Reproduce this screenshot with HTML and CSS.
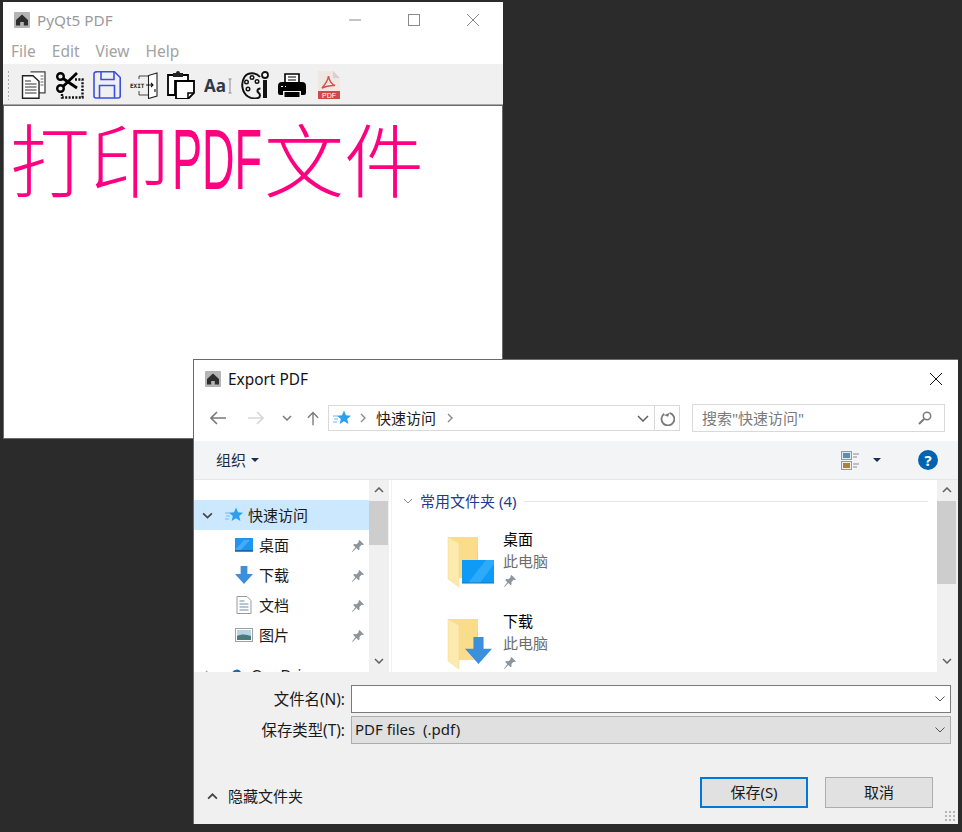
FILE: index.html
```html
<!DOCTYPE html>
<html>
<head>
<meta charset="utf-8">
<title>PyQt5 PDF</title>
<link rel="stylesheet" href="styles.css">
</head>
<body>
<svg class="defs" width="0" height="0">
    <symbol id="home" viewBox="0 0 16 16">
        <rect width="16" height="16" rx="1" fill="#b4b4b4"/>
        <path d="M8 2.500 14 8v5.500H9.800V10H6.200v3.500H2V8z" fill="#2d2d2d"/>
    </symbol>
    <symbol id="pin" viewBox="0 0 14 14">
        <path d="M8.500 1 13 5.500l-1.200.6-1.200-.4-2.200 2.200.2 2.400-1 1-2.200-2.200L1.500 13 1 12.500l3.400-4.200L2.200 6.100l1-1 2.400.2 2.200-2.200-.4-1.200z" fill="#8c959c"/>
    </symbol>
    <symbol id="star" viewBox="0 0 18 16">
        <path d="M11 0.500l2 4.800 5 .4-3.800 3.300 1.200 5-4.400-2.700-4.400 2.700 1.200-5L4 5.700l5-.4z" fill="#2b9ff0"/>
        <path d="M0 6h5M1 9h4M0 12h4" stroke="#6cbcf2" stroke-width="1"/>
    </symbol>
    <symbol id="folder" viewBox="0 0 48 52">
        <path d="M12 1h19v41H12z" fill="#f5cf6e"/>
        <path d="M1 1h30v3l-2 38H12z" fill="#fbdc8b"/>
        <path d="M1 1l11 6v44L1 43z" fill="#fdeaae" stroke="#f0d58f" stroke-width=".5"/>
    </symbol>
    <symbol id="arrow" viewBox="0 0 16 16">
        <path d="M5 0h6v7h5l-8 9-8-9h5z" fill="#3b8fdc"/>
    </symbol>
</svg>

<div class="window main-window">
    <div class="titlebar">
        <svg class="app-icon"><use href="#home"/></svg>
        <span class="main-title">PyQt5 PDF</span>
        <div class="caption-buttons">
            <svg class="caption" viewBox="0 0 14 14"><path d="M1 7h12" stroke="#8a8a8a"/></svg>
            <svg class="caption" viewBox="0 0 14 14"><rect x="1.500" y="1.500" width="11" height="11" fill="none" stroke="#8a8a8a"/></svg>
            <svg class="caption" viewBox="0 0 14 14"><path d="M1 1l12 12M13 1 1 13" stroke="#8a8a8a"/></svg>
        </div>
    </div>
    <div class="menubar">
        <span>File</span><span>Edit</span><span>View</span><span>Help</span>
    </div>
    <div class="toolbar">
        <div class="grip"></div>
        <svg class="tool" viewBox="0 0 28 28">
            <path d="M11.500 .8h14.500v21h-6" fill="#fff" stroke="#444" stroke-width="1.300"/>
            <path d="M3.500 4.700h10.500l6 5.500v17H3.500z" fill="#fff" stroke="#222" stroke-width="1.400"/>
            <path d="M6 10h6M6 13h11.500M6 16h11.500M6 19h11.500M6 22h11.500" stroke="#333" stroke-width="1.200"/>
            <path d="M21.500 5h3M21.500 8h3M21.500 11h3M21.500 14h3" stroke="#666"/>
        </svg>
        <svg class="tool" viewBox="0 0 28 28">
            <circle cx="4.500" cy="5.500" r="3.300" fill="none" stroke="#000" stroke-width="2.400"/>
            <circle cx="4.500" cy="17.500" r="3.300" fill="none" stroke="#000" stroke-width="2.400"/>
            <path d="M7 7.500 21 17M7 15.500 21 2" stroke="#000" stroke-width="2.800"/>
            <path d="M19 8.500h7.500v18H6V22" fill="none" stroke="#111" stroke-width="2.400" stroke-dasharray="2 1.400"/>
        </svg>
        <svg class="tool" viewBox="0 0 28 28">
            <path d="M3 .8h18.500L27.200 6.500V25a2 2 0 0 1-2 2H3a2 2 0 0 1-2-2V3a2 2 0 0 1 2-2z" fill="none" stroke="#3d4fe0" stroke-width="1.600"/>
            <path d="M8 1v7.500h13V1M6.500 27V14.500h15V27" fill="none" stroke="#3d4fe0" stroke-width="1.600"/>
        </svg>
        <svg class="tool" viewBox="0 0 28 28">
            <text class="exit-label" x="0" y="17">EXIT</text>
            <path d="M9 8V5h10M9 20v4h10" fill="none" stroke="#444" stroke-width="1"/>
            <path d="M18.500 4.500 27 2v23l-8.500 2.500z" fill="#fff" stroke="#222" stroke-width="1.100"/>
            <path d="M16 14h7m-2-2 2 2-2 2M25 18v3" fill="none" stroke="#111" stroke-width="1.100"/>
        </svg>
        <svg class="tool" viewBox="0 0 28 28">
            <path d="M1 4h20v6H8v14H1z" fill="#fff" stroke="#000" stroke-width="1.800"/>
            <path d="M6 2h3a2 2 0 0 1 4 0h3v4H6z" fill="#222"/>
            <path d="M9 10h18v12l-6 6H9z" fill="#fff" stroke="#000" stroke-width="1.800"/>
            <path d="M27 22h-6v6" fill="none" stroke="#000" stroke-width="1.500"/>
        </svg>
        <svg class="tool" viewBox="0 0 28 28">
            <text class="aa-label" x="0" y="21">Aa</text>
            <path d="M24.500 8h3M26 8v14M24.500 22h3" stroke="#8a8a8a" fill="none"/>
        </svg>
        <svg class="tool" viewBox="0 0 28 28">
            <path d="M19 6C15 1 7 1 3.500 6-.5 12 1 22 7 25.500c5 3 12 2.500 12-1 0-3-3-2.500-2.500-5 .3-1.500 1.500-2 3-2" fill="none" stroke="#111" stroke-width="2"/>
            <circle cx="11" cy="6.500" r="1.800" fill="none" stroke="#111" stroke-width="1.400"/>
            <circle cx="5.500" cy="11" r="1.800" fill="none" stroke="#111" stroke-width="1.400"/>
            <circle cx="16" cy="10.500" r="1.800" fill="none" stroke="#111" stroke-width="1.400"/>
            <circle cx="7" cy="18" r="1.800" fill="none" stroke="#111" stroke-width="1.400"/>
            <circle cx="24" cy="4" r="3" fill="#fff" stroke="#111" stroke-width="1.800"/>
            <path d="M22 9h4v18h-4z" fill="#111"/>
        </svg>
        <svg class="tool" viewBox="0 0 28 28">
            <path d="M7 3h14v9H7z" fill="#fff" stroke="#000" stroke-width="1.600"/>
            <path d="M10 6h8M10 9h8" stroke="#000" stroke-width="1.200"/>
            <path d="M4 11h20a4 4 0 0 1 4 4v7a2 2 0 0 1-2 2h-3v-4H5v4H2a2 2 0 0 1-2-2v-7a4 4 0 0 1 4-4z" fill="#000"/>
            <path d="M6.500 21h15v5h-15z" fill="#000"/>
            <path d="M3 15.500h2M7 15.500h1" stroke="#fff"/>
        </svg>
        <svg class="tool pdf-tool" viewBox="0 0 23 28">
            <path d="M0 0h15l7 7v21H0z" fill="#efe8e2"/>
            <path d="M15 0v7h7z" fill="#d8d0ca"/>
            <path d="M10.500 5c-.5 4-3 8-6.500 12 4-2 8-3 13-2.500-3-1-6-5-6.500-9.500z" fill="none" stroke="#d2514f" stroke-width="1.500"/>
            <rect y="20" width="22" height="8" fill="#d2494b"/>
            <text class="pdf-label" x="11" y="26.500">PDF</text>
        </svg>
    </div>
    <div class="editor">打印<span class="latin-slot"><span class="latin">PDF</span></span>文件</div>
</div>

<div class="window dialog">
    <div class="titlebar dialog-title">
        <svg class="app-icon"><use href="#home"/></svg>
        <span>Export PDF</span>
        <svg class="dialog-close" viewBox="0 0 14 14"><path d="M1 1l12 12M13 1 1 13" stroke="#111"/></svg>
    </div>
    <div class="navbar">
        <svg class="nav-icon" viewBox="0 0 16 14"><path d="M1 7h15M7 1 1 7l6 6" fill="none" stroke="#7a7a7a" stroke-width="1.600"/></svg>
        <svg class="nav-icon nav-forward" viewBox="0 0 16 14"><path d="M0 7h15M9 1l6 6-6 6" fill="none" stroke="#d8d8d8" stroke-width="1.600"/></svg>
        <svg class="nav-drop" viewBox="0 0 10 6"><path d="M1 1l4 4 4-4" fill="none" stroke="#7a7a7a" stroke-width="1.500"/></svg>
        <svg class="nav-up" viewBox="0 0 14 16"><path d="M7 16V1M1 7l6-6 6 6" fill="none" stroke="#7a7a7a" stroke-width="1.600"/></svg>
        <div class="address">
            <svg class="addr-star"><use href="#star"/></svg>
            <svg class="crumb" viewBox="0 0 6 10"><path d="M1 1l4 4-4 4" fill="none" stroke="#8a8a8a" stroke-width="1.400"/></svg>
            <span>快速访问</span>
            <svg class="crumb last" viewBox="0 0 6 10"><path d="M1 1l4 4-4 4" fill="none" stroke="#8a8a8a" stroke-width="1.400"/></svg>
            <svg class="addr-drop" viewBox="0 0 12 7"><path d="M1 1l5 5 5-5" fill="none" stroke="#606060" stroke-width="1.500"/></svg>
            <div class="refresh">
                <svg viewBox="0 0 14 14" width="15" height="15"><path d="M4 2.500A6 6 0 1 0 9 1.700" fill="none" stroke="#7a7a7a" stroke-width="1.700"/><path d="M8.500 0v4h-4z" fill="#7a7a7a" transform="rotate(20 4 2)"/></svg>
            </div>
        </div>
        <div class="search">
            <span>搜索"快速访问"</span>
            <svg viewBox="0 0 14 14" width="14" height="14"><circle cx="9" cy="5" r="3.700" fill="none" stroke="#7a7a7a" stroke-width="1.500"/><path d="M6 8 1 13" stroke="#7a7a7a" stroke-width="2"/></svg>
        </div>
    </div>
    <div class="commandbar">
        <span>组织</span>
        <i class="caret"></i>
        <div class="command-right">
            <svg class="view-icon" viewBox="0 0 19 19">
                <rect x=".5" y=".5" width="10" height="8" fill="#dfe8ef" stroke="#9a9a9a"/>
                <rect x="2" y="2" width="7" height="5" fill="#5a8fae"/>
                <rect x=".5" y="10.500" width="10" height="8" fill="#eee" stroke="#9a9a9a"/>
                <rect x="2" y="12" width="7" height="5" fill="#a9843c"/>
                <path d="M12 3h6M12 6h4M12 13h6M12 16h4" stroke="#8a8a8a"/>
            </svg>
            <i class="caret view-caret"></i>
            <b class="help">?</b>
        </div>
    </div>
    <div class="panes">
        <div class="sidebar">
            <div class="tree">
                <div class="tree-row selected">
                    <svg class="tree-chevron" viewBox="0 0 10 6"><path d="M1 1l4 4 4-4" fill="none" stroke="#444" stroke-width="1.500"/></svg>
                    <svg class="tree-star"><use href="#star"/></svg>
                    <span>快速访问</span>
                </div>
                <div class="tree-row child">
                    <svg class="tree-icon" viewBox="0 0 18 14"><rect width="18" height="13" fill="#1e96f0"/><path d="M0 13h18" stroke="#1b4f7c" stroke-width="1.400"/><path d="M0 12 9 2h6L6 12z" fill="#45abf5"/></svg>
                    <span>桌面</span>
                    <svg class="pin"><use href="#pin"/></svg>
                </div>
                <div class="tree-row child">
                    <svg class="tree-icon"><use href="#arrow"/></svg>
                    <span>下载</span>
                    <svg class="pin"><use href="#pin"/></svg>
                </div>
                <div class="tree-row child">
                    <svg class="tree-icon" viewBox="0 0 18 18"><path d="M2 .5h10l4 4v13H2z" fill="#fff" stroke="#9a9a9a"/><path d="M4.500 5h5M4.500 8h9M4.500 11h9M4.500 14h9" stroke="#6a8fa8"/></svg>
                    <span>文档</span>
                    <svg class="pin"><use href="#pin"/></svg>
                </div>
                <div class="tree-row child">
                    <svg class="tree-icon" viewBox="0 0 18 14"><rect x=".5" y=".5" width="17" height="13" fill="#fff" stroke="#a0a0a0"/><rect x="2" y="2" width="14" height="10" fill="#b5d4e6"/><path d="M2 8c4-2 9-2 14 0v4H2z" fill="#4a7a7a"/></svg>
                    <span>图片</span>
                    <svg class="pin"><use href="#pin"/></svg>
                </div>
                <div class="tree-row onedrive">
                    <svg class="tree-chevron side" viewBox="0 0 6 10"><path d="M1 1l4 4-4 4" fill="none" stroke="#a0a0a0" stroke-width="1.400"/></svg>
                    <svg class="tree-star" viewBox="0 0 18 12"><path d="M4 11a3.500 3.500 0 0 1 0-7 5 5 0 0 1 9-1 4 4 0 0 1 1 8z" fill="#0f6cbd"/></svg>
                    <span>OneDrive</span>
                </div>
            </div>
            <div class="scrollbar">
                <svg class="scroll-arrow" viewBox="0 0 10 6"><path d="M1 5l4-4 4 4" fill="none" stroke="#606060" stroke-width="1.500"/></svg>
                <div class="thumb side-thumb"></div>
                <svg class="scroll-arrow bottom" viewBox="0 0 10 6"><path d="M1 1l4 4 4-4" fill="none" stroke="#606060" stroke-width="1.500"/></svg>
            </div>
        </div>
        <div class="files">
            <div class="file-list">
                <div class="group-head">
                    <svg viewBox="0 0 10 6" width="10" height="6"><path d="M1 1l4 4 4-4" fill="none" stroke="#888" stroke-width="1"/></svg>
                    <span>常用文件夹 (4)</span>
                    <i></i>
                </div>
                <div class="file-item">
                    <div class="folder">
                        <svg class="folder-base"><use href="#folder"/></svg>
                        <svg class="folder-badge" viewBox="0 0 32 24"><rect width="32" height="23" fill="#0e9bf8"/><path d="M6 23 24 0h8v4L18 23z" fill="#2eaafa"/><path d="M0 23h32" stroke="#1a6ea8"/></svg>
                    </div>
                    <div class="file-text">
                        <b>桌面</b>
                        <span>此电脑</span>
                        <svg class="pin"><use href="#pin"/></svg>
                    </div>
                </div>
                <div class="file-item">
                    <div class="folder">
                        <svg class="folder-base"><use href="#folder"/></svg>
                        <svg class="folder-arrow"><use href="#arrow"/></svg>
                    </div>
                    <div class="file-text">
                        <b>下载</b>
                        <span>此电脑</span>
                        <svg class="pin"><use href="#pin"/></svg>
                    </div>
                </div>
            </div>
            <div class="scrollbar">
                <svg class="scroll-arrow" viewBox="0 0 10 6"><path d="M1 5l4-4 4 4" fill="none" stroke="#606060" stroke-width="1.500"/></svg>
                <div class="thumb file-thumb"></div>
                <svg class="scroll-arrow bottom" viewBox="0 0 10 6"><path d="M1 1l4 4 4-4" fill="none" stroke="#606060" stroke-width="1.500"/></svg>
            </div>
        </div>
    </div>
    <div class="footer">
        <div class="form">
            <label>文件名(N):</label>
            <div class="combo">
                <svg viewBox="0 0 10 6" width="10" height="6"><path d="M0.500 .5 5 5l4.500-4.500" fill="none" stroke="#555"/></svg>
            </div>
            <label>保存类型(T):</label>
            <div class="combo type">
                <span>PDF files&nbsp; (.pdf)</span>
                <svg viewBox="0 0 10 6" width="10" height="6"><path d="M0.500 .5 5 5l4.500-4.500" fill="none" stroke="#555"/></svg>
            </div>
        </div>
        <div class="actions">
            <div class="hide-folders">
                <svg viewBox="0 0 10 6" width="11" height="7"><path d="M1 5l4-4 4 4" fill="none" stroke="#444" stroke-width="1.600"/></svg>
                <span>隐藏文件夹</span>
            </div>
            <button class="btn primary">保存(S)</button>
            <button class="btn">取消</button>
        </div>
        <div class="resize-grip"></div>
    </div>
</div>
</body>
</html>
```

FILE: styles.css
```css
* {
    margin: 0;
    padding: 0;
    box-sizing: border-box;
}

body {
    width: 962px;
    height: 832px;
    overflow: hidden;
    background-color: #2b2b2b;
    font-family: "Noto Sans", "Noto Sans CJK SC", sans-serif;
    font-size: 15px;
    color: #1a1a1a;
    position: relative;
}

.defs {
    position: absolute;
}

.window {
    position: absolute;
    display: flex;
    flex-direction: column;
    background-color: #fff;
}

.main-window {
    left: 3px;
    top: 2px;
    width: 500px;
    height: 437px;
}

.dialog {
    left: 193px;
    top: 359px;
    width: 765px;
    height: 465px;
    border-left: 1px solid #6a6a6a;
    border-top: 1px solid #6a6a6a;
}

.titlebar {
    display: flex;
    align-items: center;
    flex-shrink: 0;
}

.main-window .titlebar {
    height: 36px;
    padding-left: 11px;
}

.app-icon {
    width: 16px;
    height: 16px;
}

.main-title {
    margin-left: 7px;
    font-size: 15.300px;
    color: #9a9a9a;
}

.caption-buttons {
    margin-left: auto;
    display: flex;
    gap: 45px;
    padding-right: 23px;
}

.caption {
    width: 14px;
    height: 14px;
}

.menubar {
    height: 27px;
    display: flex;
    gap: 16px;
    align-items: center;
    padding: 0 8px;
    font-size: 15.500px;
    color: #a2a2a2;
    border-bottom: 1px solid #f0f0f0;
    flex-shrink: 0;
}

.toolbar {
    height: 40px;
    display: flex;
    align-items: center;
    gap: 9px;
    background-color: #f0f0f0;
    border-bottom: 1px solid #a8a8a8;
    flex-shrink: 0;
    padding-left: 4px;
}

.grip {
    width: 3px;
    height: 30px;
    background-image: radial-gradient(#aaa 1px, transparent 1px);
    background-size: 3px 4px;
}

.tool {
    width: 28px;
    height: 28px;
}

.pdf-tool {
    width: 23px;
    margin-left: 3px;
}

.exit-label {
    font-family: "DejaVu Sans Mono", monospace;
    font-size: 6px;
    font-weight: bold;
    fill: #222;
}

.aa-label {
    font-family: "Open Sans", sans-serif;
    font-size: 17px;
    font-weight: bold;
    fill: #2e3a48;
}

.pdf-label {
    font-family: "Liberation Sans", sans-serif;
    font-size: 7px;
    fill: #fff;
    text-anchor: middle;
}

.editor {
    flex: 1;
    border: 1px solid #6a6a6a;
    padding-left: 6px;
    font-family: "Noto Sans CJK SC", sans-serif;
    font-size: 80px;
    font-weight: 300;
    line-height: 96px;
    color: #ff0080;
    white-space: nowrap;
}

.latin-slot {
    display: inline-block;
    width: 94px;
    vertical-align: 2px;
}

/* the reference face is a tall condensed one, none is installed */
.latin {
    display: inline-block;
    margin-left: 2px;
    font-family: "Liberation Sans", sans-serif;
    font-size: 85px;
    font-weight: normal;
    transform: scaleX(.53);
    transform-origin: left;
}

.dialog-title {
    height: 38px;
    padding-left: 11px;
    gap: 7px;
    font-size: 15.400px;
    color: #111;
}

.dialog-close {
    width: 14px;
    height: 14px;
    margin-left: auto;
    margin-right: 15px;
}

.navbar {
    height: 43px;
    display: flex;
    align-items: center;
    flex-shrink: 0;
    padding: 0 0 3px 16px;
}

.nav-icon {
    width: 16px;
    height: 14px;
}

.nav-forward {
    margin-left: 22px;
}

.nav-drop {
    width: 10px;
    height: 6px;
    margin-left: 18px;
}

.nav-up {
    width: 12px;
    height: 15px;
    margin-left: 15px;
}

.address {
    width: 352px;
    height: 26px;
    margin-left: 9px;
    display: flex;
    align-items: center;
    border: 1px solid #d9d9d9;
    padding-left: 4px;
}

.addr-star {
    width: 18px;
    height: 16px;
}

.crumb {
    width: 6px;
    height: 10px;
    margin: 0 10px 0 9px;
}

.crumb.last {
    margin-left: 11px;
}

.addr-drop {
    width: 12px;
    height: 7px;
    margin-left: auto;
    margin-right: 5px;
}

.refresh {
    width: 25px;
    height: 24px;
    border-left: 1px solid #d9d9d9;
    display: flex;
    align-items: center;
    justify-content: center;
}

.search {
    width: 253px;
    height: 28px;
    margin-left: 12px;
    display: flex;
    align-items: center;
    justify-content: space-between;
    padding: 0 12px 0 9px;
    border: 1px solid #d9d9d9;
    color: #7a7a7a;
}

/* noto sits a pixel lower than the reference's ui font */
.address span,
.search span,
.commandbar > span,
.tree-row span,
.group-head span,
.combo span,
.hide-folders span,
.form label,
.btn {
    padding-bottom: 2px;
}

.commandbar {
    height: 39px;
    display: flex;
    align-items: center;
    flex-shrink: 0;
    padding-left: 22px;
    background-color: #f3f4f6;
    border-bottom: 1px solid #e6e6e6;
    color: #1c2b41;
}

.caret {
    width: 0;
    height: 0;
    margin-left: 5px;
    border-left: 4px solid transparent;
    border-right: 4px solid transparent;
    border-top: 4px solid #1c2b50;
}

.command-right {
    margin-left: auto;
    display: flex;
    align-items: center;
    padding-right: 20px;
}

.view-icon {
    width: 19px;
    height: 19px;
}

.view-caret {
    margin-left: 13px;
}

.help {
    width: 20px;
    height: 20px;
    margin-left: 37px;
    border-radius: 50%;
    background-color: #0063b1;
    color: #fff;
    font-size: 15px;
    line-height: 20px;
    text-align: center;
}

.panes {
    height: 192px;
    display: flex;
    flex-shrink: 0;
    overflow: hidden;
}

.sidebar {
    width: 195px;
    display: flex;
    flex-shrink: 0;
}

.tree {
    width: 175px;
    padding-top: 20px;
    overflow: hidden;
}

.tree-row {
    height: 30px;
    display: flex;
    align-items: center;
    position: relative;
    white-space: nowrap;
}

.tree-row.selected {
    background-color: #cce8ff;
    padding-left: 8px;
}

.tree-chevron {
    width: 11px;
    height: 7px;
}

.tree-chevron.side {
    width: 6px;
    height: 10px;
    margin-left: 11px;
    margin-right: 5px;
}

.tree-star {
    width: 18px;
    height: 16px;
    margin-left: 12px;
    margin-right: 5px;
}

.tree-row.child {
    padding-left: 41px;
}

.tree-icon {
    width: 18px;
    height: 18px;
    margin-right: 6px;
}

.tree-row .pin {
    position: absolute;
    right: 4px;
    top: 9px;
}

.pin {
    width: 14px;
    height: 14px;
}

.onedrive {
    margin-top: 10px;
}

.scrollbar {
    width: 20px;
    flex-shrink: 0;
    background-color: #f0f0f0;
    position: relative;
}

.files .scrollbar {
    width: 21px;
}

.scroll-arrow {
    position: absolute;
    left: 5px;
    top: 7px;
    width: 10px;
    height: 6px;
}

.scroll-arrow.bottom {
    top: auto;
    bottom: 8px;
}

.thumb {
    position: absolute;
    left: 0;
    top: 21px;
    width: 19px;
    background-color: #cdcdcd;
}

.side-thumb {
    height: 44px;
}

.file-thumb {
    height: 83px;
}

.files {
    flex: 1;
    display: flex;
    border-left: 1px solid #f2f2f2;
    margin-left: 2px;
}

.file-list {
    flex: 1;
    overflow: hidden;
    padding: 13px 9px 0 11px;
}

.group-head {
    display: flex;
    align-items: center;
    height: 16px;
    color: #1e3a8a;
}

.group-head span {
    margin-left: 7px;
}

.group-head i {
    flex: 1;
    height: 1px;
    margin-left: 8px;
    background-color: #e5e5e5;
}

.file-item {
    display: flex;
    height: 82px;
    padding-left: 44px;
    padding-top: 19px;
}

.folder {
    position: relative;
    width: 56px;
}

.folder-base {
    width: 48px;
    height: 52px;
    position: absolute;
    top: 8px;
    left: 0;
}

.folder-badge {
    position: absolute;
    left: 15px;
    top: 32px;
    width: 32px;
    height: 24px;
}

.folder-arrow {
    position: absolute;
    left: 18px;
    top: 26px;
    width: 27px;
    height: 29px;
}

.file-text {
    display: flex;
    flex-direction: column;
    line-height: 22px;
}

.file-text b {
    margin-top: 1px;
    line-height: 21px;
    font-weight: normal;
    color: #000;
}

.file-text span {
    color: #6d6d6d;
}

.file-text .pin {
    margin-top: 2px;
}

.footer {
    flex: 1;
    background-color: #f0f0f0;
    padding: 13px 6px 0 0;
    position: relative;
}

.form {
    display: grid;
    grid-template-columns: 151px 600px;
    column-gap: 6px;
    row-gap: 3px;
    justify-content: start;
    align-items: center;
}

.form label {
    text-align: right;
    font-size: 15.400px;
}

.combo {
    height: 28px;
    display: flex;
    align-items: center;
    padding: 0 5px 0 3px;
    border: 1px solid #7a7a7a;
    background-color: #fff;
}

.combo svg {
    margin-left: auto;
}

.combo.type {
    background-color: #e0e0e0;
    border-color: #adadad;
}

.actions {
    display: flex;
    align-items: center;
    margin-top: 33px;
    padding-right: 19px;
    height: 31px;
}

.hide-folders {
    display: flex;
    align-items: center;
    gap: 10px;
    padding-left: 13px;
    margin-right: auto;
    margin-top: 7px;
}

.btn {
    width: 108px;
    height: 31px;
    margin-left: 17px;
    font-family: inherit;
    font-size: 15px;
    color: #1a1a1a;
    background-color: #e1e1e1;
    border: 1px solid #adadad;
}

.btn.primary {
    border: 2px solid #0078d7;
}

.resize-grip {
    position: absolute;
    right: 3px;
    bottom: 3px;
    width: 11px;
    height: 11px;
    background-image: radial-gradient(#b5b5b5 1.500px, transparent 1.500px);
    background-size: 4px 4px;
}
```
